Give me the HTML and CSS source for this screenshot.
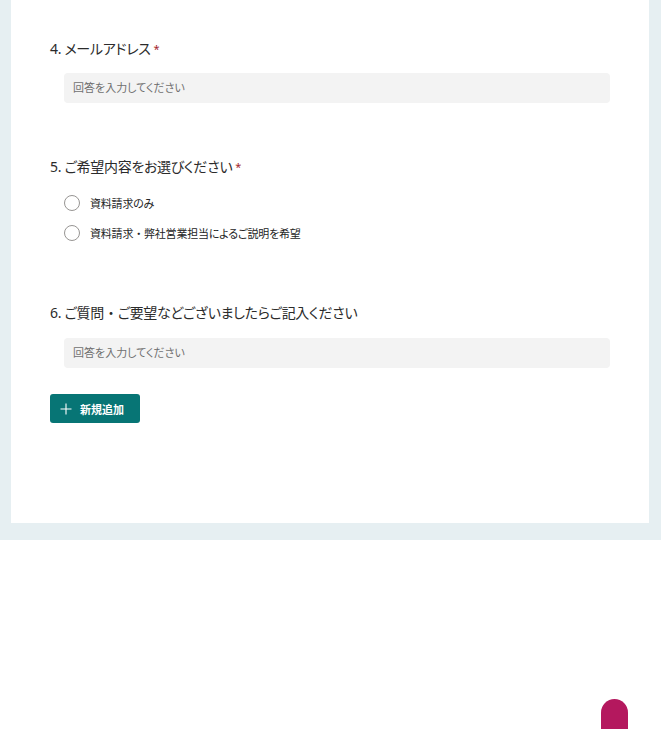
FILE: index.html
```html
<!DOCTYPE html>
<html lang="ja">
<head>
  <meta charset="UTF-8">
  <meta name="viewport" content="width=device-width, initial-scale=1.0">
  <title>お問い合わせフォーム</title>
  <link rel="stylesheet" href="styles.css">
</head>
<body>

<div class="form-wrap">
  <div class="form-card">

    <!-- Q4 -->
    <div class="question">
      <div class="question-title">4. メールアドレス<span class="required">*</span></div>
      <div class="answer-box">回答を入力してください</div>
    </div>

    <!-- Q5 -->
    <div class="question question-choice">
      <div class="question-title">5. ご希望内容をお選びください<span class="required">*</span></div>
      <ul class="choices">
        <li class="choice"><span class="radio"></span><span>資料請求のみ</span></li>
        <li class="choice"><span class="radio"></span><span>資料請求<span class="dot">・</span>弊社営業担当によるご説明を希望</span></li>
      </ul>
    </div>

    <!-- Q6 -->
    <div class="question question-last">
      <div class="question-title">6. ご質問<span class="dot">・</span>ご要望などございましたらご記入ください</div>
      <div class="answer-box">回答を入力してください</div>
    </div>

    <button class="add-button">
      <svg width="12" height="12" viewBox="0 0 12 12"><path d="M6 0.5v11M0.5 6h11" stroke="#fff" stroke-width="1.1" fill="none"/></svg>
      <span>新規追加</span>
    </button>

  </div>
</div>

<div class="help-bubble"></div>

</body>
</html>
```

FILE: styles.css
```css
html, body {
  margin: 0;
  background: #fff;
  font-family: 'Noto Sans', 'Noto Sans CJK JP', sans-serif;
  font-feature-settings: "palt";
  color: #242424;
}

.dot {
  font-feature-settings: normal;
}

.form-wrap {
  background: #e6eff2;
  padding: 0 12px 17px 11px;
}

.form-card {
  background: #fff;
  padding: 39px 39px 100px 39px;
}

.question-title {
  font-size: 14px;
  line-height: 20px;
  letter-spacing: -0.3px;
  color: #2b2b2b;
}

.required {
  color: #a4262c;
  font-size: 11px;
  margin-left: 3px;
  vertical-align: top;
}

.answer-box {
  margin: 14px 0 0 14px;
  height: 30px;
  line-height: 30px;
  padding: 0 9px;
  background: #f3f3f3;
  border-radius: 4px;
  color: #707070;
  font-size: 11px;
}

.question-choice {
  margin-top: 54px;
}

.choices {
  list-style: none;
  margin: 11px 0 0 14px;
  padding: 0;
}

.choice {
  display: flex;
  align-items: center;
  gap: 10px;
  height: 30px;
  font-size: 11px;
  letter-spacing: -0.2px;
}

.radio {
  width: 14px;
  height: 14px;
  border: 1.5px solid #979593;
  border-radius: 50%;
}

.question-last {
  margin-top: 55px;
}

.question-last .answer-box {
  margin-top: 15px;
}

.add-button {
  display: flex;
  align-items: center;
  gap: 8px;
  margin-top: 26px;
  width: 90px;
  height: 29px;
  padding: 0 10px;
  border: none;
  border-radius: 3px;
  background: #077575;
  color: #fff;
  font-family: inherit;
  font-size: 11px;
  font-weight: bold;
}

.help-bubble {
  position: fixed;
  left: 601px;
  top: 699px;
  width: 27px;
  height: 60px;
  border-radius: 13.5px;
  background: #b4185e;
}
```
